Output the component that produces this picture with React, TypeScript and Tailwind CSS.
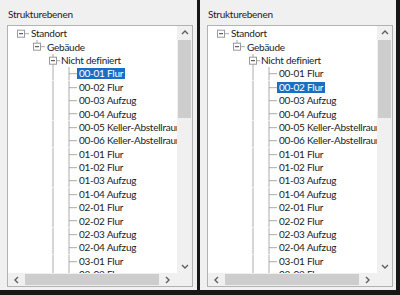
import React from 'react';

const FONT = "font-['Lato','Noto_Sans',sans-serif]";
const ROW_H = 13.4;

type TreeRow = { label: string; level: 0 | 1 | 2 | 3 };

const leaves = [
  '00-01 Flur',
  '00-02 Flur',
  '00-03 Aufzug',
  '00-04 Aufzug',
  '00-05 Keller-Abstellraum',
  '00-06 Keller-Abstellraum',
  '01-01 Flur',
  '01-02 Flur',
  '01-03 Aufzug',
  '01-04 Aufzug',
  '02-01 Flur',
  '02-02 Flur',
  '02-03 Aufzug',
  '02-04 Aufzug',
  '03-01 Flur',
  '03-02 Flur',
  '03-03 Aufzug',
];

const rows: TreeRow[] = [
  { label: 'Standort', level: 0 },
  { label: 'Gebäude', level: 1 },
  { label: 'Nicht definiert', level: 2 },
  ...leaves.map((label) => ({ label, level: 3 as const })),
];

// text start offset for each level, relative to the tree's inner left edge
const gutter = [23, 39, 53, 71];
const LINE = '#ababab';

const MinusBox = ({ cx, cy }: { cx: number; cy: number }) => (
  <>
    <rect x={cx - 3.5} y={cy - 3.5} width={7} height={7} fill="#fff" stroke="#9a9a9a" strokeWidth={1} />
    <line x1={cx - 2} y1={cy} x2={cx + 2} y2={cy} stroke="#3a3a3a" strokeWidth={1} />
  </>
);

const Connectors = ({ level }: { level: number }) => {
  const w = gutter[level];
  const mid = ROW_H / 2;
  return (
    <svg width={w} height={ROW_H} className="shrink-0">
      {level === 0 && (
        <>
          <line x1={16.5} y1={mid} x2={21} y2={mid} stroke={LINE} />
          <MinusBox cx={13} cy={mid} />
        </>
      )}
      {level === 1 && (
        <>
          <line x1={29} y1={0} x2={29} y2={mid - 3.5} stroke={LINE} />
          <line x1={32.5} y1={mid} x2={37} y2={mid} stroke={LINE} />
          <MinusBox cx={29} cy={mid} />
        </>
      )}
      {level === 2 && (
        <>
          <line x1={45} y1={0} x2={45} y2={ROW_H} stroke={LINE} />
          <line x1={48.5} y1={mid} x2={52} y2={mid} stroke={LINE} />
          <MinusBox cx={45} cy={mid} />
        </>
      )}
      {level === 3 && (
        <>
          <line x1={45} y1={0} x2={45} y2={ROW_H} stroke={LINE} />
          <line x1={61} y1={0} x2={61} y2={ROW_H} stroke={LINE} />
          <line x1={61} y1={mid} x2={69} y2={mid} stroke={LINE} />
        </>
      )}
    </svg>
  );
};

const Chevron = ({ dir }: { dir: 'up' | 'down' | 'left' | 'right' }) => {
  const pts = {
    up: '1,5 4,2 7,5',
    down: '1,2 4,5 7,2',
    left: '5,1 2,4 5,7',
    right: '2,1 5,4 2,7',
  }[dir];
  return (
    <svg width={8} height={8} viewBox="0 0 8 8">
      <polyline points={pts} fill="none" stroke="#5f5f5f" strokeWidth={1.4} />
    </svg>
  );
};

const Tree = ({ selected }: { selected: string }) => (
  <div className="grid h-[262px] w-[186px] grid-cols-[1fr_15px] grid-rows-[1fr_13px] border border-[#b2b2b2] bg-white">
    <div className="overflow-hidden whitespace-nowrap pt-[1px]">
      {rows.map((row) => {
        const active = row.label === selected;
        return (
          <div key={row.label} className="flex h-[13.4px] items-center">
            <Connectors level={row.level} />
            <span
              className={
                active
                  ? 'ml-[-2px] bg-[#1a6fc4] px-[2px] leading-[11px] text-white'
                  : 'ml-[-2px] px-[2px] leading-[11px] text-[#222]'
              }
            >
              {row.label}
            </span>
          </div>
        );
      })}
    </div>
    <div className="flex flex-col bg-[#f0f0f0]">
      <div className="flex h-[14px] items-center justify-center">
        <Chevron dir="up" />
      </div>
      <div className="mx-[1px] h-[78px] bg-[#cdcdcd]" />
      <div className="flex-1" />
      <div className="flex h-[13px] items-center justify-center">
        <Chevron dir="down" />
      </div>
    </div>
    <div className="flex items-center bg-[#f0f0f0]">
      <div className="flex w-[17px] justify-center">
        <Chevron dir="left" />
      </div>
      <div className="h-[11px] w-[134px] bg-[#cdcdcd]" />
      <div className="flex flex-1 justify-center">
        <Chevron dir="right" />
      </div>
    </div>
    <div className="bg-[#f0f0f0]" />
  </div>
);

const Panel = ({ selected, width }: { selected: string; width: string }) => (
  <div className={`flex h-[290px] flex-col bg-[#f0f0f0] pl-[7px] ${width}`}>
    <div className="h-[25px] pl-[1px] pt-[8px] text-[10px] leading-[12px] text-[#222]">Strukturebenen</div>
    <Tree selected={selected} />
  </div>
);

export default function App() {
  return (
    <div className={`flex h-[295px] w-[400px] items-start gap-[3px] bg-[#171717] text-[10px] tracking-[-0.25px] ${FONT}`}>
      <Panel selected="00-01 Flur" width="w-[197px]" />
      <Panel selected="00-02 Flur" width="w-[196px]" />
    </div>
  );
}
